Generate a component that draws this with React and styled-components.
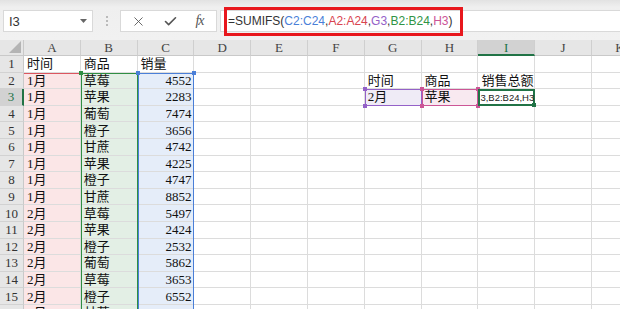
import React from 'react'
import styled, { createGlobalStyle } from 'styled-components'
import { X, Check } from 'lucide-react'

const GlobalStyle = createGlobalStyle`
  html, body {
    margin: 0;
    padding: 0;
    background: #ffffff;
  }
  body {
    width: 620px;
    height: 309px;
    overflow: hidden;
  }
`

const Window = styled.div`
  width: 620px;
  height: 309px;
  overflow: hidden;
  display: flex;
  flex-direction: column;
`

const Toolbar = styled.div`
  height: 40px;
  box-sizing: border-box;
  padding: 10px 0 0 3px;
  display: flex;
  align-items: flex-start;
  background: linear-gradient(#e2e2e2 0, #efefef 7px, #f1f1f1 100%);
  flex-shrink: 0;
`

const NameBox = styled.div`
  width: 90px;
  height: 22px;
  box-sizing: border-box;
  background: #fff;
  border: 1px solid #d9d9d9;
  display: flex;
  align-items: center;
  justify-content: space-between;
  padding: 0 5px 0 5px;
  font: 13px 'Liberation Sans', Arial, sans-serif;
  color: #333;
`

const Separator = styled.div`
  width: 27px;
  height: 22px;
  display: flex;
  flex-direction: column;
  align-items: center;
  justify-content: center;
  gap: 2px;

  span {
    width: 2px;
    height: 2px;
    background: #a8a8a8;
    border-radius: 1px;
  }
`

const FuncButtons = styled.div`
  width: 97px;
  height: 22px;
  box-sizing: border-box;
  background: #fff;
  border: 1px solid #d9d9d9;
  display: flex;
  align-items: center;
  justify-content: space-around;
  padding: 0 4px 0 2px;
  color: #555;
`

const Fx = styled.span`
  font: italic 14px 'Liberation Serif', 'Times New Roman', serif;
  color: #555;
  letter-spacing: -1px;
`

const FormulaBox = styled.div`
  flex: 1;
  margin-left: 3px;
  height: 22px;
  box-sizing: border-box;
  background: #fff;
  border: 1px solid #d9d9d9;
  border-right: none;
  display: flex;
  align-items: center;
  padding-left: 3px;
`

const Highlight = styled.div`
  width: 239px;
  height: 29px;
  flex-shrink: 0;
  box-sizing: border-box;
  border: 3px solid #e8171d;
  display: flex;
  align-items: center;
  padding-left: 1px;
  font: 12px 'Liberation Sans', Arial, sans-serif;
  color: #333;
  white-space: nowrap;
`

const Ref = styled.span`
  color: ${({ $c }) => $c};
`

const Sheet = styled.div`
  flex: 1;
  display: grid;
  grid-template-columns: 24px repeat(11, 56.8px);
  grid-template-rows: 16px repeat(16, 16.6px);
  overflow: hidden;
  background: #fff;
`

const Corner = styled.div`
  grid-column: 1;
  grid-row: 1;
  background: #e6e6e6;
  border-right: 1px solid #c9c9c9;
  border-bottom: 1px solid #c9c9c9;
  box-sizing: border-box;
  display: flex;
  align-items: flex-end;
  justify-content: flex-end;
  padding: 0 2px 2px 0;
`

const ColHead = styled.div`
  grid-column: ${({ $col }) => $col};
  grid-row: 1;
  box-sizing: border-box;
  background: ${({ $active }) => ($active ? '#d2d2d2' : '#e6e6e6')};
  border-right: 1px solid #cfcfcf;
  border-bottom: ${({ $active }) => ($active ? '2px solid #217346' : '1px solid #c9c9c9')};
  display: flex;
  align-items: center;
  justify-content: center;
  font: 13px 'Liberation Serif', 'Times New Roman', serif;
  color: ${({ $active }) => ($active ? '#217346' : '#444')};
  line-height: 1;
`

const RowHead = styled.div`
  grid-column: 1;
  grid-row: ${({ $row }) => $row};
  box-sizing: border-box;
  background: ${({ $active }) => ($active ? '#d2d2d2' : '#e6e6e6')};
  border-right: ${({ $active }) => ($active ? '2px solid #217346' : '1px solid #c9c9c9')};
  border-bottom: 1px solid #d2d2d2;
  display: flex;
  align-items: center;
  justify-content: center;
  font: 13px 'Liberation Serif', 'Times New Roman', serif;
  color: ${({ $active }) => ($active ? '#217346' : '#333')};
  line-height: 1;
`

const Cell = styled.div`
  grid-column: ${({ $col }) => $col};
  grid-row: ${({ $row }) => $row};
  box-sizing: border-box;
  border-right: 1px solid #dcdcdc;
  border-bottom: 1px solid #dcdcdc;
  display: flex;
  align-items: center;
  justify-content: ${({ $right }) => ($right ? 'flex-end' : 'flex-start')};
  padding: 0 2px 0 3px;
  font: 13px 'Liberation Serif', 'Noto Sans CJK SC', serif;
  color: #111;
  white-space: nowrap;
  overflow: hidden;
  line-height: 1;
`

const RangeFill = styled.div`
  grid-column: ${({ $col }) => $col};
  grid-row: ${({ $row }) => $row};
  background: ${({ $fill }) => $fill};
`

const RangeFrame = styled.div`
  grid-column: ${({ $col }) => $col};
  grid-row: ${({ $row }) => $row};
  position: relative;
  box-sizing: border-box;
  border-style: solid;
  border-color: ${({ $c }) => $c};
  border-width: ${({ $w }) => $w || '1px'};
  pointer-events: none;
  z-index: 2;
`

const Handle = styled.span`
  position: absolute;
  width: 4px;
  height: 4px;
  background: ${({ $c }) => $c};
  ${({ $top }) => ($top ? 'top: -3px;' : 'bottom: -3px;')}
  ${({ $left }) => ($left ? 'left: -3px;' : 'right: -3px;')}
`

const EditText = styled.div`
  grid-column: 10;
  grid-row: 4;
  z-index: 3;
  display: flex;
  align-items: center;
  padding-left: 2px;
  font: 9.5px 'Liberation Sans', Arial, sans-serif;
  color: #222;
  white-space: nowrap;
  overflow: hidden;
`

const cols = ['A', 'B', 'C', 'D', 'E', 'F', 'G', 'H', 'I', 'J', 'K']

const data = [
  ['时间', '商品', '销量'],
  ['1月', '草莓', 4552],
  ['1月', '苹果', 2283],
  ['1月', '葡萄', 7474],
  ['1月', '橙子', 3656],
  ['1月', '甘蔗', 4742],
  ['1月', '苹果', 4225],
  ['1月', '橙子', 4747],
  ['1月', '甘蔗', 8852],
  ['2月', '草莓', 5497],
  ['2月', '苹果', 2424],
  ['2月', '橙子', 2532],
  ['2月', '葡萄', 5862],
  ['2月', '草莓', 3653],
  ['2月', '橙子', 6552],
  ['2月', '甘蔗', 7944],
]

const lookup = {
  '2-G': '时间',
  '2-H': '商品',
  '2-I': '销售总额',
  '3-G': '2月',
  '3-H': '苹果',
}

const ranges = [
  { col: '2', row: '3 / -1', fill: '#fbe6e7', c: '#dc5660', w: '1px 0 0 0' },
  { col: '3', row: '3 / -1', fill: '#e3efe5', c: '#2f8e42', handles: true },
  { col: '4', row: '3 / -1', fill: '#e5edf9', c: '#4a7fd8', handles: true },
  { col: '8', row: '4', fill: '#efebf6', c: '#9461c8', handles: true, single: true },
  { col: '9', row: '4', fill: '#f8e9f0', c: '#cc5596', handles: true, single: true },
]

function cellValue(r, ci) {
  const row = data[r - 1]
  if (ci < 3 && row) return row[ci]
  return lookup[`${r}-${cols[ci]}`]
}

const App = () => {
  return (
    <Window>
      <GlobalStyle />
      <Toolbar>
        <NameBox>
          I3
          <svg width="7" height="4" viewBox="0 0 7 4">
            <polygon points="0,0 7,0 3.5,4" fill="#666" />
          </svg>
        </NameBox>
        <Separator>
          <span />
          <span />
          <span />
        </Separator>
        <FuncButtons>
          <X size={15} strokeWidth={1.4} />
          <Check size={15} strokeWidth={2.6} />
          <Fx>fx</Fx>
        </FuncButtons>
        <FormulaBox>
          <Highlight>
            =SUMIFS(<Ref $c="#4a7fd8">C2:C24</Ref>,<Ref $c="#d9444f">A2:A24</Ref>,
            <Ref $c="#9461c8">G3</Ref>,<Ref $c="#2f9444">B2:B24</Ref>,
            <Ref $c="#cc5596">H3</Ref>)
          </Highlight>
        </FormulaBox>
      </Toolbar>

      <Sheet>
        <Corner>
          <svg width="12" height="12" viewBox="0 0 12 12">
            <polygon points="12,0 12,12 0,12" fill="#b4b4b4" />
          </svg>
        </Corner>
        {cols.map((c, i) => (
          <ColHead key={c} $col={i + 2} $active={c === 'I'}>
            {c}
          </ColHead>
        ))}

        {ranges.map((r, i) => (
          <RangeFill key={'f' + i} $col={r.col} $row={r.row} $fill={r.fill} />
        ))}

        {Array.from({ length: 16 }, (_, k) => {
          const r = k + 1
          return (
            <React.Fragment key={r}>
              <RowHead $row={r + 1} $active={r === 3}>
                {r}
              </RowHead>
              {cols.map((c, ci) => {
                const v = cellValue(r, ci)
                return (
                  <Cell
                    key={c}
                    $col={ci + 2}
                    $row={r + 1}
                    $right={typeof v === 'number'}
                  >
                    {v}
                  </Cell>
                )
              })}
            </React.Fragment>
          )
        })}

        {ranges.map((r, i) => (
          <RangeFrame key={'b' + i} $col={r.col} $row={r.row} $c={r.c} $w={r.w}>
            {r.handles && (
              <>
                <Handle $c={r.c} $top $left />
                <Handle $c={r.c} $top />
                {r.single && (
                  <>
                    <Handle $c={r.c} $left />
                    <Handle $c={r.c} />
                  </>
                )}
              </>
            )}
          </RangeFrame>
        ))}

        <RangeFrame $col="10" $row="4" $c="#217346" $w="2px">
          <Handle $c="#217346" />
        </RangeFrame>
        <EditText>3,B2:B24,H3</EditText>
      </Sheet>
    </Window>
  )
}

export default App
